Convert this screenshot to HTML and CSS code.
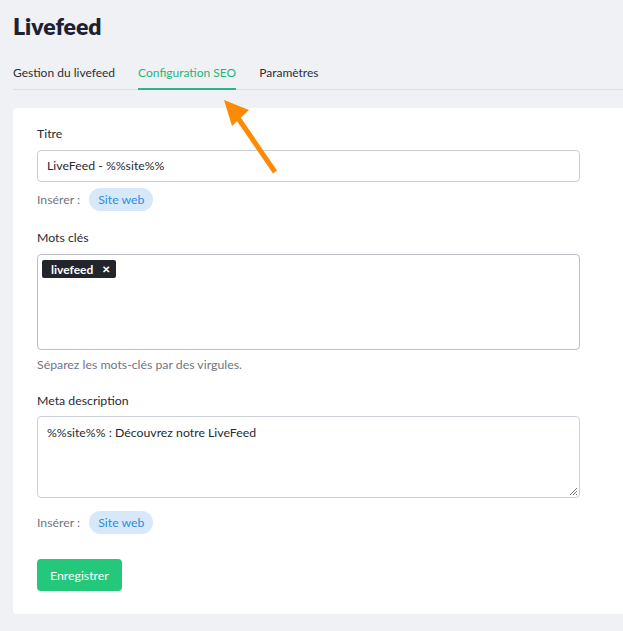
FILE: index.html
```html
<!DOCTYPE html>
<html lang="fr">
<head>
<meta charset="utf-8">
<title>Livefeed</title>
<link rel="stylesheet" href="styles.css">
</head>
<body>
<div class="page">
  <h1 class="title">Livefeed</h1>
  <nav class="tabs">
    <span class="tab">Gestion du livefeed</span>
    <span class="tab active">Configuration SEO</span>
    <span class="tab">Paramètres</span>
  </nav>
  <section class="card">
    <div class="field">
      <label class="label">Titre</label>
      <div class="input">LiveFeed - %%site%%</div>
      <div class="insert"><span class="insert-label">Insérer :</span><span class="pill">Site web</span></div>
    </div>
    <div class="field">
      <label class="label">Mots clés</label>
      <div class="tagbox"><span class="tag">livefeed <span class="tag-x">✕</span></span></div>
      <div class="help">Séparez les mots-clés par des virgules.</div>
    </div>
    <div class="field">
      <label class="label label-tight">Meta description</label>
      <div class="textarea">%%site%% : Découvrez notre LiveFeed
        <svg class="grip" width="9" height="9" viewBox="0 0 9 9"><path d="M8 1L1 8M8 4L4 8M8 7L7 8" stroke="#777" stroke-width="1"/></svg>
      </div>
      <div class="insert insert-lower"><span class="insert-label">Insérer :</span><span class="pill">Site web</span></div>
    </div>
    <button class="btn">Enregistrer</button>
  </section>
  <svg class="arrow" width="70" height="80" viewBox="0 0 70 80">
    <path d="M55 74 L18 20" stroke="#fd8a05" stroke-width="5" stroke-linecap="butt"/>
    <polygon points="4,2 29,12 12,28" fill="#fd8a05"/>
  </svg>
</div>
</body>
</html>
```
FILE: styles.css
```css
html, body {
  margin: 0;
  padding: 0;
  background: #f0f1f5;
}
body {
  font-family: "Lato", "Noto Sans", sans-serif;
  color: #262a33;
  font-size: 12.3px;
}
.page {
  position: relative;
  padding-left: 13px;
  padding-top: 11px;
  padding-bottom: 17px;
}
.title {
  margin: 0;
  font-size: 23px;
  line-height: 30px;
  font-weight: 800;
  color: #1d2130;
}
.tabs {
  display: flex;
  gap: 23px;
  margin-top: 23px;
  border-bottom: 1px solid #dcdee3;
}
.tab {
  font-size: 12px;
  line-height: 18px;
  padding-bottom: 6px;
  border-bottom: 2px solid transparent;
  margin-bottom: -1px;
  color: #2b2f38;
}
.tab.active {
  color: #1fb57c;
  border-bottom-color: #2bb584;
}
.card {
  margin-top: 18px;
  background: #fff;
  border-radius: 4px 0 0 4px;
  padding: 17px 43px 23px 24px;
}
.field + .field {
  margin-top: 18px;
}
.label {
  display: block;
  line-height: 18px;
  margin-bottom: 7px;
  color: #262a33;
}
.label-tight {
  margin-bottom: 6px;
}
.input {
  height: 32px;
  box-sizing: border-box;
  border: 1px solid #c9ccd3;
  border-radius: 4px;
  padding: 0 9px;
  line-height: 30px;
}
.insert {
  display: flex;
  align-items: center;
  gap: 9px;
  margin-top: 6px;
  height: 23px;
}
.insert-lower {
  margin-top: 13px;
}
.insert-label {
  color: #707582;
}
.pill {
  background: #d7e9f8;
  color: #2d8de3;
  border-radius: 12px;
  height: 23px;
  line-height: 23px;
  padding: 0 9px;
}
.tagbox {
  height: 96px;
  box-sizing: border-box;
  border: 1px solid #bdbfc4;
  border-radius: 4px;
  padding: 5px 4px;
}
.tag {
  display: inline-flex;
  align-items: center;
  gap: 9px;
  background: #22252b;
  color: #fff;
  font-size: 12px;
  font-weight: 700;
  height: 18px;
  padding: 0 6px 0 9px;
  border-radius: 2px;
}
.tag-x {
  font-size: 10px;
  font-weight: 700;
}
.help {
  margin-top: 6px;
  line-height: 18px;
  color: #707582;
  font-size: 12.3px;
}
.textarea {
  position: relative;
  height: 82px;
  box-sizing: border-box;
  border: 1px solid #ccd0d8;
  border-radius: 4px;
  padding: 7px 9px;
  line-height: 18px;
}
.grip {
  position: absolute;
  right: 1px;
  bottom: 1px;
}
.btn {
  display: block;
  margin-top: 25px;
  height: 32px;
  padding: 0 13px;
  background: #23c87b;
  color: #fff;
  border: none;
  border-radius: 4px;
  font-family: inherit;
  font-size: 12.3px;
}
.arrow {
  position: absolute;
  left: 220px;
  top: 98px;
}
```
